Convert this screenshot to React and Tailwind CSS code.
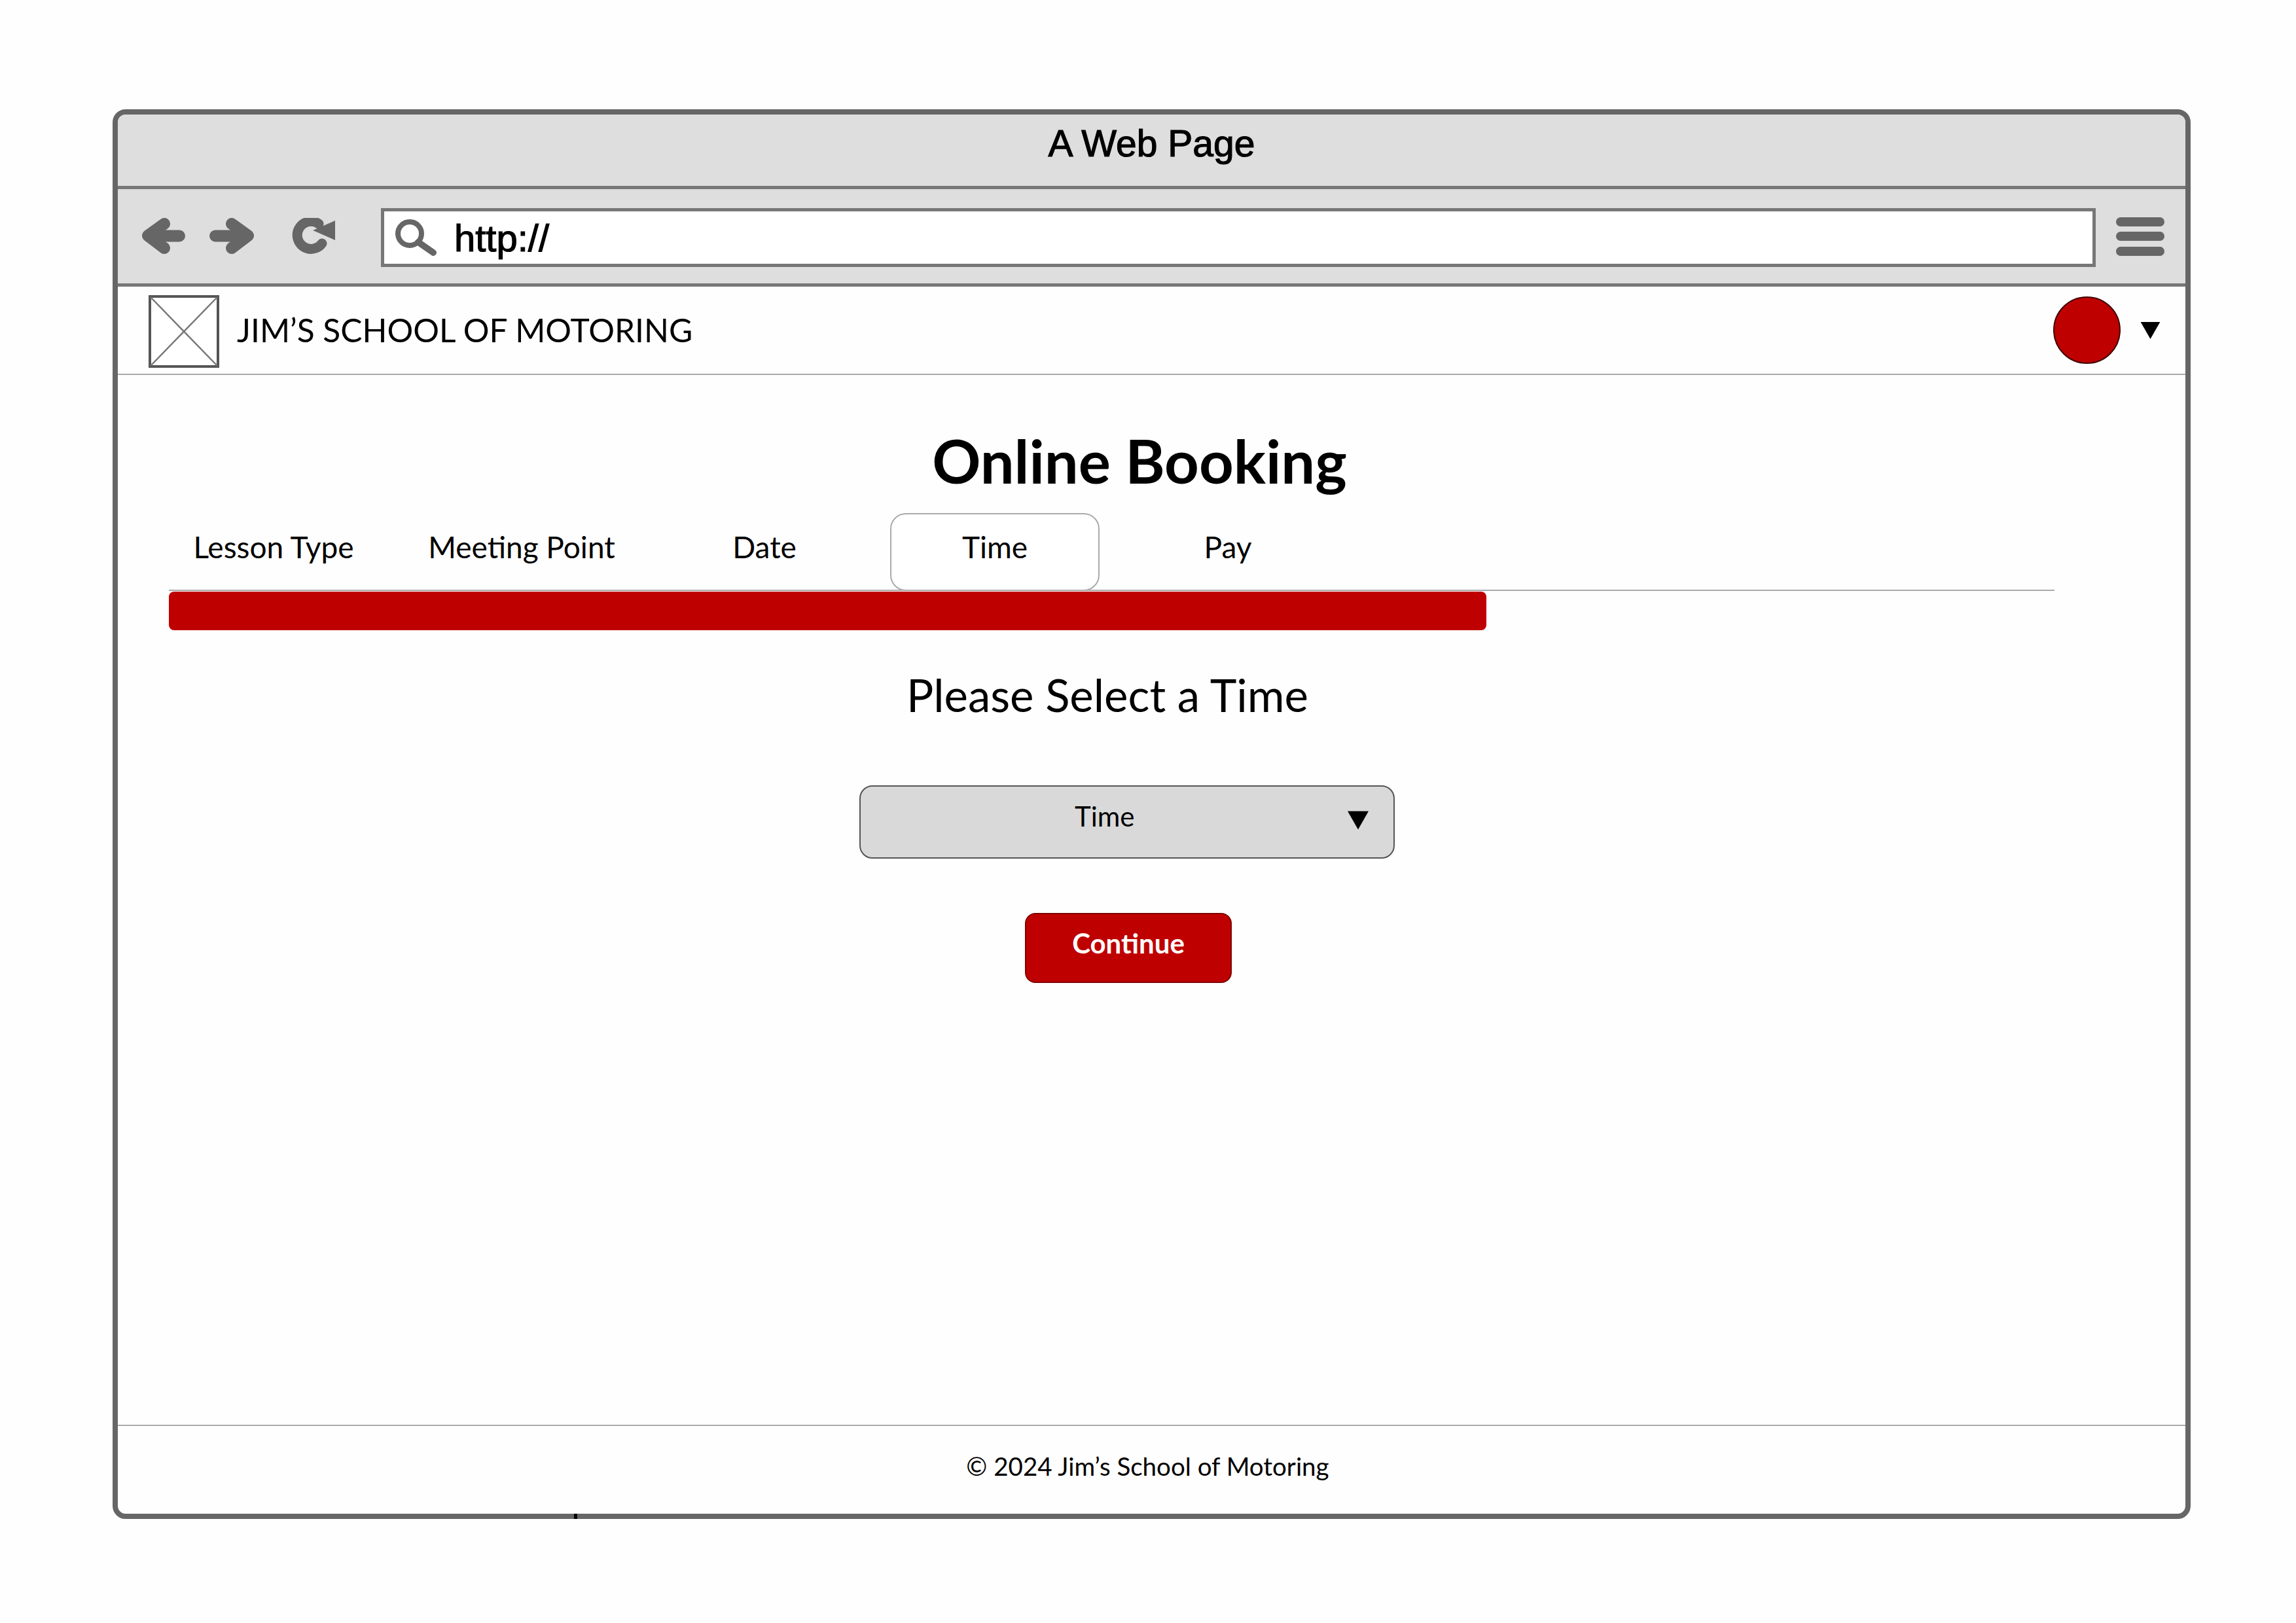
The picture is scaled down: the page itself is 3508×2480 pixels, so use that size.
const font = "font-['Lato','Carlito',sans-serif]";

function Back() {
  return (
    <svg width="67" height="56" viewBox="0 0 67 56" className="shrink-0">
      <path d="M35 9 L10 27 L35 46" fill="#666" stroke="#666" strokeWidth="18" strokeLinejoin="round" strokeLinecap="round" />
      <path d="M20 27.5 H58" stroke="#666" strokeWidth="18" strokeLinecap="round" />
    </svg>
  );
}
function Forward() {
  return (
    <svg width="69" height="56" viewBox="0 0 69 56" className="shrink-0">
      <path d="M35 9 L60 27 L35 46" fill="#666" stroke="#666" strokeWidth="18" strokeLinejoin="round" strokeLinecap="round" />
      <path d="M10 27.5 H50" stroke="#666" strokeWidth="18" strokeLinecap="round" />
    </svg>
  );
}
function Reload() {
  return (
    <svg width="68" height="56" viewBox="0 0 68 56" className="shrink-0">
      <path d="M48 39 A21 21 0 1 1 43 9" fill="none" stroke="#666" strokeWidth="15" strokeLinecap="round" />
      <path d="M68 4 V34 L34 19 Z" fill="#666" />
    </svg>
  );
}
function Search() {
  return (
    <svg width="69" height="56" viewBox="0 0 69 56" className="shrink-0">
      <circle cx="25" cy="22" r="18" fill="none" stroke="#666" strokeWidth="8" />
      <path d="M38 35 L61 51" stroke="#666" strokeWidth="10" strokeLinecap="round" />
    </svg>
  );
}
function Hamburger() {
  return (
    <svg width="74" height="59" viewBox="0 0 74 59" className="shrink-0">
      <rect x="0" y="0" width="74" height="14" rx="7" fill="#666" />
      <rect x="0" y="22" width="74" height="14" rx="7" fill="#666" />
      <rect x="0" y="45" width="74" height="14" rx="7" fill="#666" />
    </svg>
  );
}
function Logo() {
  return (
    <svg width="108" height="111" viewBox="0 0 108 111" className="shrink-0">
      <rect x="2" y="2" width="104" height="107" fill="#fff" stroke="#555" strokeWidth="4" />
      <path d="M3 3 L105 108 M105 3 L3 108" stroke="#777" strokeWidth="2.5" />
    </svg>
  );
}
function Caret({ w, h }) {
  return (
    <svg width={w} height={h} viewBox="0 0 32 28" className="shrink-0">
      <path d="M0 0 H32 L16 28 Z" fill="#000" />
    </svg>
  );
}

const tabs = [
  { label: "Lesson Type", cls: "w-[320px]" },
  { label: "Meeting Point", cls: "w-[438px]" },
  { label: "Date", cls: "w-[304px] mr-[40px]" },
  { label: "Time", cls: "w-[320px] border-2 border-[#aaa] rounded-[24px] bg-white", active: true },
  { label: "Pay", cls: "w-[392px]" },
];

export default function App() {
  return (
    <div className={`w-[3508px] h-[2480px] bg-[#fefefe] pl-[172px] pt-[167px] text-black ${font}`}>
      <div className="relative w-[3175px] h-[2154px] border-[8px] border-[#666] rounded-[20px] bg-[#fefefe] flex flex-col">
        <div className="h-[114px] shrink-0 bg-[#dedede] border-b-[5px] border-[#777] rounded-t-[12px] flex items-center justify-center pb-[19px] font-['Liberation_Sans',sans-serif] text-[57px] [-webkit-text-stroke:1.2px_#000]">
          A Web Page
        </div>
        <div className="h-[149px] shrink-0 bg-[#dedede] border-b-[5px] border-[#777] flex items-center pl-[36px]">
          <Back />
          <div className="ml-[36px]"><Forward /></div>
          <div className="ml-[56px]"><Reload /></div>
          <div className="ml-[70px] mt-[4px] w-[2620px] h-[90px] bg-white border-[5px] border-[#777] flex items-center pl-[14px]">
            <Search />
            <span className="ml-[24px] font-['Liberation_Sans',sans-serif] text-[58px] [-webkit-text-stroke:1.2px_#000]">http://</span>
          </div>
          <div className="ml-[31px]"><Hamburger /></div>
        </div>
        <div className="h-[135px] shrink-0 border-b-2 border-[#aaa] flex items-center pl-[47px] pr-[38px]">
          <div className="mt-[4px]"><Logo /></div>
          <span className="ml-[27px] text-[49.7px]">JIM’S SCHOOL OF MOTORING</span>
          <div className="ml-auto w-[103px] h-[103px] rounded-full bg-[#bf0000] border-2 border-[#400000]" />
          <div className="ml-[30px]"><Caret w={31} h={26} /></div>
        </div>
        <main className="flex-1 flex flex-col pl-[78px] items-start">
          <h1 className="w-[2966px] text-center font-bold text-[92px] leading-[100px] mt-[81px]">Online Booking</h1>
          <div className="mt-[30px] w-[2881px] h-[119px] border-b-2 border-[#aaa] flex items-start">
            {tabs.map((t) => (
              <div key={t.label} className={`${t.cls} h-[119px] text-center text-[46px] ${t.active ? "leading-[99px]" : "leading-[103px]"}`}>
                {t.label}
              </div>
            ))}
          </div>
          <div className="mt-px w-[2013px] h-[59px] bg-[#bf0000] rounded-lg" />
          <h2 className="w-[2868px] mt-[59px] text-center text-[69px] leading-[80px]">Please Select a Time</h2>
          <div className="ml-[1055px] mt-[98px] w-[818px] h-[112px] rounded-[20px] bg-[#d9d9d9] border-2 border-[#555] flex items-center justify-between pl-[327px] pr-[38px]">
            <span className="text-[42px] pb-[18px]">Time</span>
            <div className="pb-[6px]"><Caret w={32} h={29} /></div>
          </div>
          <div className="ml-[1308px] mt-[83px] w-[316px] h-[107px] rounded-[16px] bg-[#bf0000] border-2 border-[#800000] flex items-center justify-center pb-[15px] text-white font-bold text-[42px]">
            Continue
          </div>
        </main>
        <footer className="h-[136px] shrink-0 border-t-2 border-[#aaa] flex items-center justify-center pb-[10px] pr-[12px] text-[38.5px]">
          © 2024 Jim’s School of Motoring
        </footer>
        <div className="absolute left-[697px] bottom-[-8px] w-[5px] h-[8px] bg-black" />
      </div>
    </div>
  );
}
